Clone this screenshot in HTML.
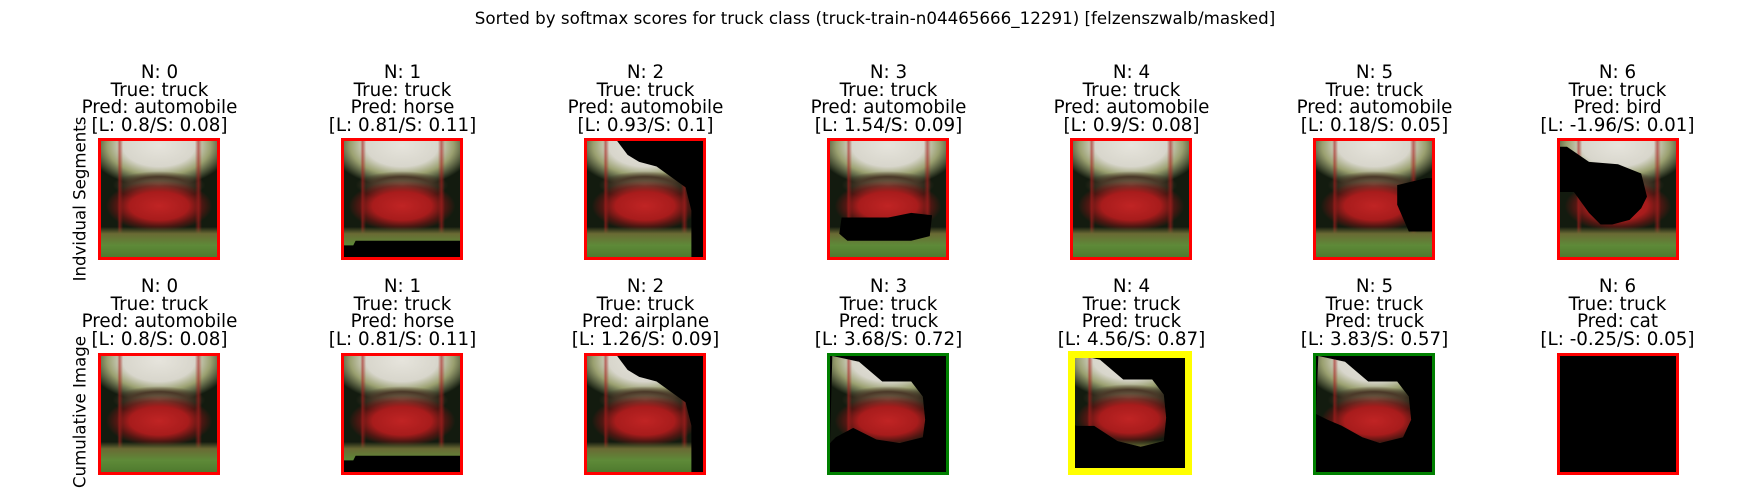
<!DOCTYPE html>
<html><head><meta charset="utf-8"><style>
body{margin:0;width:1750px;height:500px;background:#fff;position:relative;overflow:hidden;font-family:"DejaVu Sans","Liberation Sans",sans-serif;color:#000}
.t{position:absolute;width:243px;text-align:center;font-size:18.3px;line-height:17.6px;white-space:nowrap}
.b{position:absolute;width:116px;height:116px;border:3px solid #f00;overflow:hidden;background:#000}
.img{position:absolute;left:0;top:0;width:116px;height:116px;
background:
 linear-gradient(to bottom,transparent 0,transparent 74%,#6a6a34 80%,#5e8a38 90%,#4f7a2e 100%),
 linear-gradient(to right,transparent 0,transparent 14%,rgba(170,30,30,.6) 16%,transparent 19%,transparent 81%,rgba(170,30,30,.6) 84%,transparent 87%),
 radial-gradient(ellipse 46% 22% at 50% 56%,#c02424 0,#a81c1c 55%,rgba(120,20,20,.6) 80%,transparent 100%),
 radial-gradient(ellipse 40% 12% at 50% 38%,#7a6a50 0,#4a3828 60%,transparent 100%),
 radial-gradient(ellipse 62% 36% at 50% 4%,#e6e4dc 0,#d8d6cc 50%,#9aa070 72%,transparent 100%),
 #131b0f}
.k{position:absolute;left:0;top:0;width:116px;height:116px;background:#000}
.yl{position:absolute;font-size:16.6px;white-space:nowrap;transform:translate(-50%,-50%) rotate(-90deg)}
</style></head><body>
<div style="position:absolute;left:0;width:1750px;top:8px;text-align:center;font-size:16.7px">Sorted by softmax scores for truck class (truck-train-n04465666_12291) [felzenszwalb/masked]</div>
<div class="yl" style="left:80px;top:199px">Indvidual Segments</div>
<div class="yl" style="left:80px;top:412px">Cumulative Image</div>

<div class="t" style="left:38px;top:64px">N: 0<br>True: truck<br>Pred: automobile<br>[L: 0.8/S: 0.08]</div>
<div class="t" style="left:281px;top:64px">N: 1<br>True: truck<br>Pred: horse<br>[L: 0.81/S: 0.11]</div>
<div class="t" style="left:524px;top:64px">N: 2<br>True: truck<br>Pred: automobile<br>[L: 0.93/S: 0.1]</div>
<div class="t" style="left:767px;top:64px">N: 3<br>True: truck<br>Pred: automobile<br>[L: 1.54/S: 0.09]</div>
<div class="t" style="left:1010px;top:64px">N: 4<br>True: truck<br>Pred: automobile<br>[L: 0.9/S: 0.08]</div>
<div class="t" style="left:1253px;top:64px">N: 5<br>True: truck<br>Pred: automobile<br>[L: 0.18/S: 0.05]</div>
<div class="t" style="left:1496px;top:64px">N: 6<br>True: truck<br>Pred: bird<br>[L: -1.96/S: 0.01]</div>

<div class="t" style="left:38px;top:278px">N: 0<br>True: truck<br>Pred: automobile<br>[L: 0.8/S: 0.08]</div>
<div class="t" style="left:281px;top:278px">N: 1<br>True: truck<br>Pred: horse<br>[L: 0.81/S: 0.11]</div>
<div class="t" style="left:524px;top:278px">N: 2<br>True: truck<br>Pred: airplane<br>[L: 1.26/S: 0.09]</div>
<div class="t" style="left:767px;top:278px">N: 3<br>True: truck<br>Pred: truck<br>[L: 3.68/S: 0.72]</div>
<div class="t" style="left:1010px;top:278px">N: 4<br>True: truck<br>Pred: truck<br>[L: 4.56/S: 0.87]</div>
<div class="t" style="left:1253px;top:278px">N: 5<br>True: truck<br>Pred: truck<br>[L: 3.83/S: 0.57]</div>
<div class="t" style="left:1496px;top:278px">N: 6<br>True: truck<br>Pred: cat<br>[L: -0.25/S: 0.05]</div>

<div class="b" style="left:98px;top:138px"><div class="img"></div></div>
<div class="b" style="left:341px;top:138px"><div class="img"></div><div class="k" style="clip-path:polygon(0 90%,8% 90%,10% 86%,100% 86%,100% 100%,0 100%)"></div></div>
<div class="b" style="left:584px;top:138px"><div class="img"></div><div class="k" style="clip-path:polygon(26% 0,100% 0,100% 100%,90% 100%,90% 60%,85% 40%,60% 22%,45% 18%,35% 12%)"></div></div>
<div class="b" style="left:827px;top:138px"><div class="img"></div><div class="k" style="clip-path:polygon(10% 66%,50% 66%,70% 62%,88% 64%,86% 82%,70% 86%,15% 86%,8% 80%)"></div></div>
<div class="b" style="left:1070px;top:138px"><div class="img"></div></div>
<div class="b" style="left:1313px;top:138px"><div class="img"></div><div class="k" style="clip-path:polygon(70% 38%,95% 32%,100% 32%,100% 78%,80% 78%,70% 55%)"></div></div>
<div class="b" style="left:1557px;top:138px"><div class="img"></div><div class="k" style="clip-path:polygon(0 5%,6% 5%,25% 18%,50% 20%,70% 28%,75% 48%,70% 58%,60% 68%,45% 72%,35% 72%,25% 62%,12% 44%,0 44%)"></div></div>

<div class="b" style="left:98px;top:353px"><div class="img"></div></div>
<div class="b" style="left:341px;top:353px"><div class="img"></div><div class="k" style="clip-path:polygon(0 90%,8% 90%,10% 86%,100% 86%,100% 100%,0 100%)"></div></div>
<div class="b" style="left:584px;top:353px"><div class="img"></div><div class="k" style="clip-path:polygon(26% 0,100% 0,100% 100%,90% 100%,90% 60%,85% 40%,60% 22%,45% 18%,35% 12%)"></div></div>
<div class="b" style="left:827px;top:353px;border-color:#008000"><div class="img" style="clip-path:polygon(2% 0,25% 5%,45% 22%,70% 22%,80% 35%,82% 55%,80% 70%,60% 75%,40% 72%,20% 62%,5% 70%,0 75%)"></div></div>
<div class="b" style="left:1068px;top:351px;border:7px solid #ff0;width:110px;height:110px"><div class="img" style="left:-4px;top:-4px;clip-path:polygon(2% 0,25% 5%,45% 22%,70% 22%,80% 35%,82% 55%,80% 75%,60% 80%,40% 75%,20% 62%,5% 62%,0 60%)"></div></div>
<div class="b" style="left:1313px;top:353px;border-color:#008000"><div class="img" style="clip-path:polygon(2% 0,25% 5%,45% 22%,70% 22%,80% 35%,82% 55%,75% 70%,55% 75%,40% 70%,22% 60%,10% 55%,0 50%)"></div></div>
<div class="b" style="left:1557px;top:353px"></div>
</body></html>
